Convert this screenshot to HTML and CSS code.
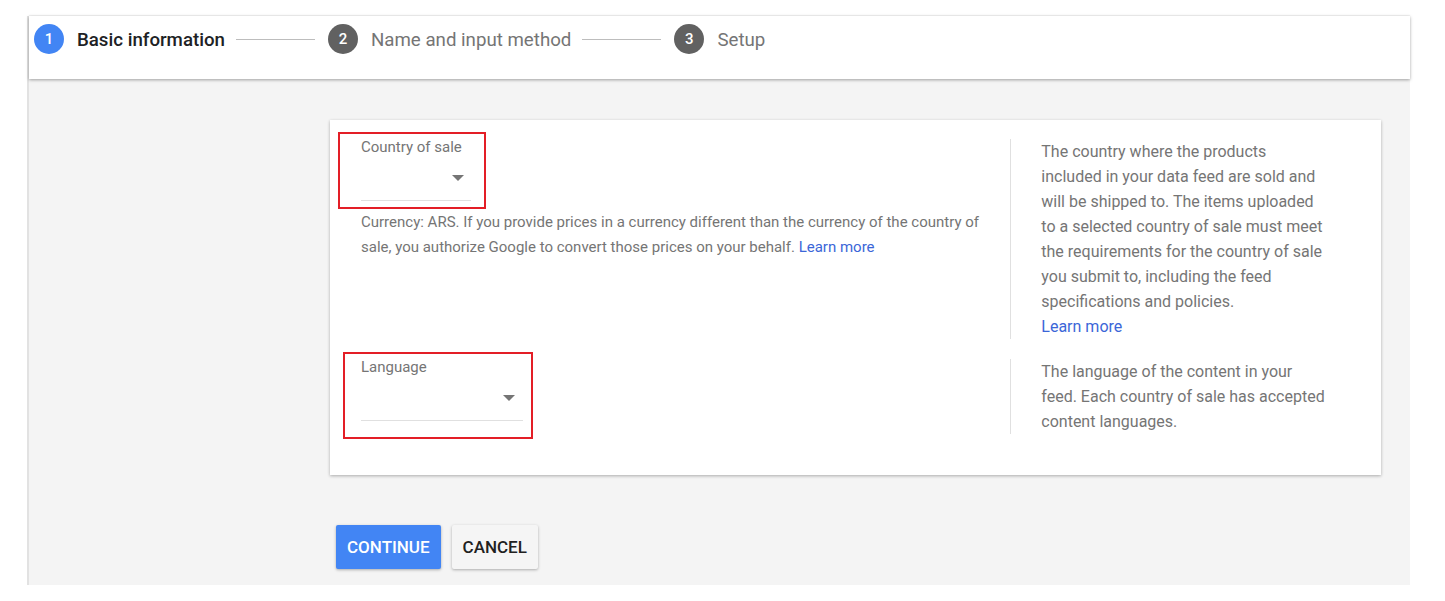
FILE: index.html
```html
<!doctype html>
<html lang="en">
    <head>
        <meta charset="utf-8">
        <meta name="viewport" content="width=device-width, initial-scale=1">
        <title>Create feed</title>
        <link rel="stylesheet" href="styles.css">
    </head>
    <body>
        <div class="frame">
            <div class="stepper">
                <div class="step is-active">
                    <span class="step-num">1</span>
                    <span class="step-label">Basic information</span>
                </div>
                <span class="step-line"></span>
                <div class="step">
                    <span class="step-num">2</span>
                    <span class="step-label">Name and input method</span>
                </div>
                <span class="step-line"></span>
                <div class="step">
                    <span class="step-num">3</span>
                    <span class="step-label">Setup</span>
                </div>
            </div>
            <div class="content">
                <div class="card">
                    <div class="row">
                        <div class="field-col">
                            <div class="field is-marked mark-country">
                                <div class="label">Country of sale</div>
                                <div class="select select-country"><span class="arrow"></span></div>
                            </div>
                            <p class="hint">Currency: ARS. If you provide prices in a currency different than the currency of the country of sale, you authorize Google to convert those prices on your behalf. <a href="#">Learn more</a></p>
                        </div>
                        <div class="help-col">
                            The country where the products included in your data feed are sold and will be shipped to. The items uploaded to a selected country of sale must meet the requirements for the country of sale you submit to, including the feed specifications and policies.<br>
                            <a href="#">Learn more</a>
                        </div>
                    </div>
                    <div class="row">
                        <div class="field-col">
                            <div class="field is-marked mark-language">
                                <div class="label">Language</div>
                                <div class="select select-language"><span class="arrow"></span></div>
                            </div>
                        </div>
                        <div class="help-col">
                            The language of the content in your feed. Each country of sale has accepted content languages.
                        </div>
                    </div>
                </div>
                <div class="actions">
                    <button class="button is-primary">CONTINUE</button>
                    <button class="button is-light">CANCEL</button>
                </div>
            </div>
        </div>
    </body>
</html>
```

FILE: styles.css
```css
html {
    font-size: 16px;
    font-family: Roboto, "Liberation Sans", sans-serif;
}
body {
    margin: 0;
    background-color: #fff;
    color: #212121;
}
.frame {
    margin: 16px 0 0 27px;
    width: 1383px;
    height: 569px;
    border-left: 2px solid #e2e2e2;
    box-sizing: border-box;
    display: flex;
    flex-direction: column;
}
.stepper {
    position: relative;
    z-index: 1;
    height: 63px;
    flex-shrink: 0;
    box-sizing: border-box;
    padding: 8px 0 0 5px;
    display: flex;
    align-items: flex-start;
    background-color: #fff;
    box-shadow: 0 1px 3px rgba(0, 0, 0, 0.35), 0 -1px 1px rgba(0, 0, 0, 0.04);
}
.step {
    display: flex;
    align-items: center;
    height: 30px;
}
.step-num {
    width: 30px;
    height: 30px;
    border-radius: 50%;
    background-color: #616161;
    color: #fff;
    font-size: 15px;
    font-weight: 500;
    display: flex;
    align-items: center;
    justify-content: center;
    margin-right: 13px;
}
.step-label {
    font-size: 18.7px;
    color: #757575;
    padding-top: 2px;
}
.step.is-active .step-num {
    background-color: #4285f4;
}
.step.is-active .step-label {
    color: #202124;
    font-weight: 500;
}
.step-line {
    width: 79px;
    height: 1px;
    background-color: #bdbdbd;
    margin: 15px 13px 0 11px;
}
.content {
    flex: 1;
    background-color: #f4f4f4;
    padding: 41px 0 0 301px;
}
.card {
    width: 1051px;
    box-sizing: border-box;
    background-color: #fff;
    padding: 19px 44px 41px 31px;
    box-shadow: 0 1px 3px rgba(0, 0, 0, 0.3);
    display: flex;
    flex-direction: column;
    gap: 20px;
}
.row {
    display: flex;
}
.field-col {
    width: 650px;
    box-sizing: border-box;
    padding-right: 26px;
}
.help-col {
    width: 287px;
    margin-right: 9px;
    border-left: 1px solid #e0e0e0;
    padding-left: 30px;
    font-size: 16px;
    line-height: 25px;
    color: #757575;
}
a {
    color: #3b66d8;
    text-decoration: none;
}
.field {
    position: relative;
    display: inline-block;
    margin-top: -2px;
}
.label {
    font-size: 15px;
    line-height: 20px;
    color: #757575;
}
.select {
    height: 44px;
    box-sizing: border-box;
    border-bottom: 1px solid #e0e0e0;
    display: flex;
    align-items: center;
    justify-content: flex-end;
    padding: 0 7px 1px 0;
}
.select-country {
    width: 110px;
}
.select-language {
    width: 162px;
    padding-right: 8px;
}
.arrow {
    width: 0;
    height: 0;
    border-left: 6px solid transparent;
    border-right: 6px solid transparent;
    border-top: 6px solid #757575;
}
.hint {
    margin: 9px 0 0 0;
    font-size: 15px;
    line-height: 25px;
    color: #757575;
}
.is-marked::after {
    content: "";
    position: absolute;
    border: 2px solid #e31e26;
}
.mark-country::after {
    left: -23px;
    top: -5px;
    right: -15px;
    bottom: -8px;
}
.mark-language::after {
    left: -18px;
    top: -5px;
    right: -10px;
    bottom: -18px;
}
.actions {
    margin: 50px 0 0 6px;
    display: flex;
    gap: 11px;
}
.button {
    font-family: Roboto, "Liberation Sans", sans-serif;
    font-size: 17px;
    font-weight: 500;
    height: 44px;
    padding: 0 11px;
    border: none;
    border-radius: 2px;
    box-shadow: 0 1px 3px rgba(0, 0, 0, 0.3);
}
.button.is-primary {
    background-color: #4285f4;
    color: #fff;
}
.button.is-light {
    background-color: #f5f5f5;
    color: #212121;
}
```
